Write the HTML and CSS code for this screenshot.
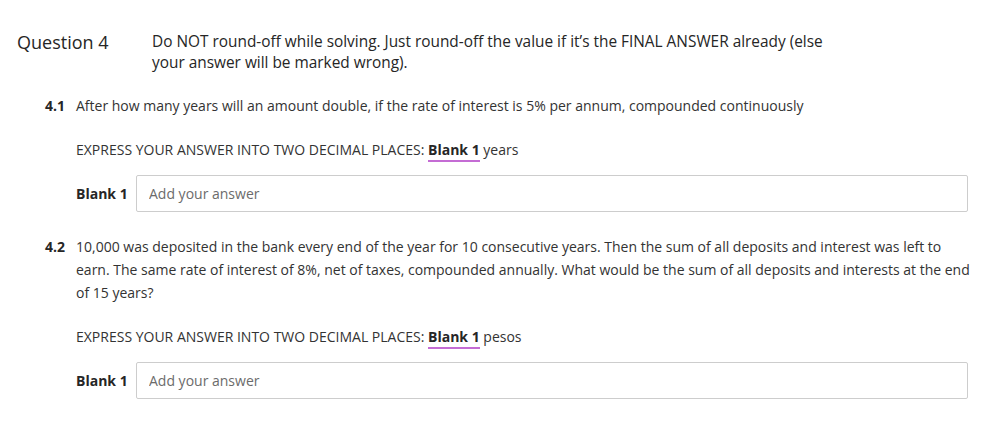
FILE: index.html
```html
<!DOCTYPE html>
<html lang="en">
  <head>
    <meta charset="UTF-8" />
    <meta name="viewport" content="width=device-width, initial-scale=1.0" />
    <title>Question 4</title>
    <link rel="stylesheet" href="styles.css">
  </head>
  <body>
    <div class="question">
      <div class="question-head">
        <h2 class="question-title">Question 4</h2>
        <p class="question-note">
          Do NOT round-off while solving. Just round-off the value if it’s the FINAL ANSWER already (else
          your answer will be marked wrong).
        </p>
      </div>

      <div class="part">
        <div class="part-num">4.1</div>
        <div class="part-body">
          <p class="part-text">After how many years will an amount double, if the rate of interest is 5% per annum, compounded continuously</p>
          <p class="express">EXPRESS YOUR ANSWER INTO TWO DECIMAL PLACES: <span class="blank-ref">Blank 1</span> years</p>
          <div class="answer-row">
            <label class="answer-label" for="ans1">Blank 1</label>
            <input class="answer-input" id="ans1" type="text" placeholder="Add your answer" />
          </div>
        </div>
      </div>

      <div class="part">
        <div class="part-num">4.2</div>
        <div class="part-body">
          <p class="part-text">10,000 was deposited in the bank every end of the year for 10 consecutive years. Then the sum of all deposits and interest was left to earn. The same rate of interest of 8%, net of taxes, compounded annually. What would be the sum of all deposits and interests at the end of 15 years?</p>
          <p class="express">EXPRESS YOUR ANSWER INTO TWO DECIMAL PLACES: <span class="blank-ref">Blank 1</span> pesos</p>
          <div class="answer-row">
            <label class="answer-label" for="ans2">Blank 1</label>
            <input class="answer-input" id="ans2" type="text" placeholder="Add your answer" />
          </div>
        </div>
      </div>
    </div>
  </body>
</html>
```

FILE: styles.css
```css
* {
  margin: 0;
  padding: 0;
  box-sizing: border-box;
}

body {
  font-family: "Open Sans", "Noto Sans", sans-serif;
  background-color: #fff;
  color: #333;
}

.question {
  padding: 31px 17px 0 17px;
}

.question-head {
  display: flex;
  align-items: flex-start;
}

.question-title {
  width: 135px;
  font-size: 18px;
  font-weight: 400;
  line-height: 22px;
  color: #262626;
}

.question-note {
  width: 690px;
  font-size: 15.4px;
  line-height: 21px;
  color: #262626;
}

.part {
  display: flex;
  margin-top: 21px;
}

.part + .part {
  margin-top: 23px;
}

.part-num {
  width: 59px;
  padding-left: 28px;
  font-size: 14px;
  font-weight: 700;
  line-height: 23px;
  color: #262626;
}

.part-body {
  flex: 1;
}

.part-text {
  font-size: 14px;
  line-height: 23px;
  color: #333;
}

.express {
  margin-top: 21px;
  font-size: 14px;
  line-height: 23px;
  color: #333;
}

.blank-ref {
  font-weight: 700;
  color: #262626;
  border-bottom: 2px solid #c46cd4;
  padding-bottom: 1px;
}

.answer-row {
  display: flex;
  align-items: center;
  margin-top: 14px;
  padding-right: 4px;
}

.answer-label {
  width: 60px;
  font-size: 14px;
  font-weight: 700;
  color: #262626;
}

.answer-input {
  flex: 1;
  height: 37px;
  padding: 0 12px;
  font-family: inherit;
  font-size: 14px;
  color: #333;
  border: 1px solid #cdcdcd;
  border-radius: 2px;
  outline: none;
}

.answer-input::placeholder {
  color: #6b6b6b;
}
```
